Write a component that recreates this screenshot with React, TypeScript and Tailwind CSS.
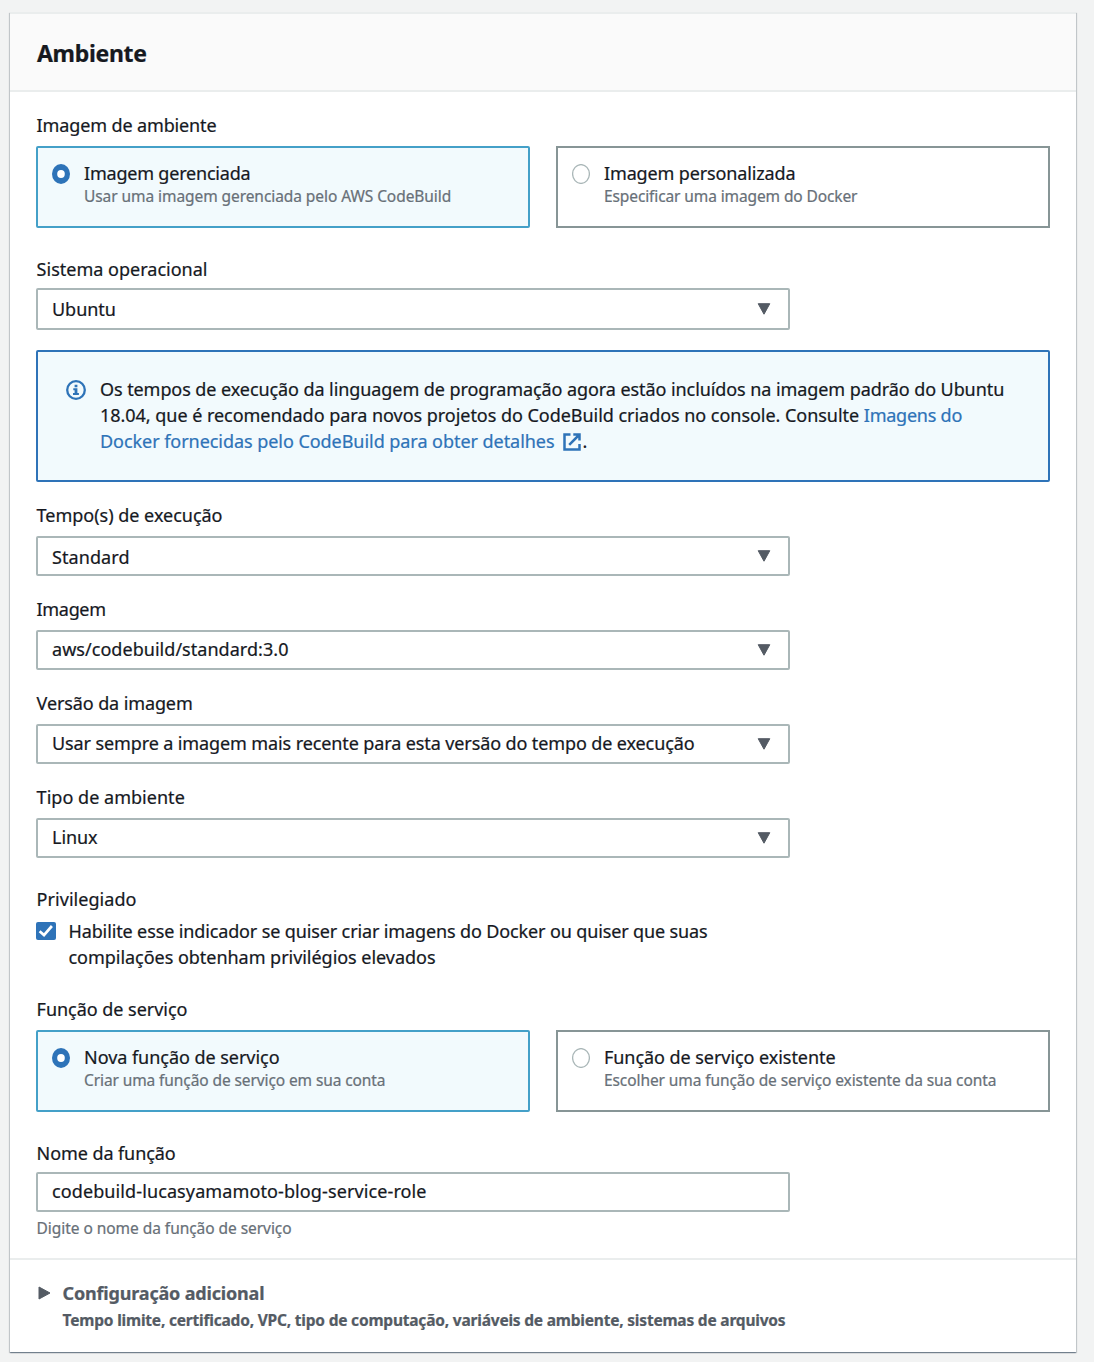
import type { ReactNode } from "react";

function Label({ children, className = "" }: { children: ReactNode; className?: string }) {
  return <div className={`h-[26px] pl-[0.6px] text-[18px] leading-[26px] whitespace-nowrap ${className}`}>{children}</div>;
}

function SelectBox({ value, className, valueClass }: { value: string; className: string; valueClass: string }) {
  return (
    <button
      type="button"
      className={`flex w-[754px] items-center justify-between rounded-[2px] border-2 border-[#aab7b8] bg-white pr-[17px] pl-[14px] text-left ${className}`}
    >
      <span className={`self-start text-[18px] leading-[26px] whitespace-nowrap ${valueClass}`}>{value}</span>
      <svg width="14" height="12" viewBox="0 0 14 12" className="shrink-0 text-[#545b64]">
        <path d="M1.2 .7h11.6L7 11.2z" fill="currentColor" stroke="currentColor" strokeWidth="1" strokeLinejoin="round" />
      </svg>
    </button>
  );
}

function Tile({
  selected = false,
  title,
  titleClass,
  text,
  textClass,
}: {
  selected?: boolean;
  title: string;
  titleClass: string;
  text: string;
  textClass: string;
}) {
  return (
    <div
      className={`flex h-[82px] w-[494px] gap-[14px] border-2 pt-3 pl-[14px] ${
        selected ? "rounded-[2px] border-[#44a0c8] bg-[#f2fafd]" : "border-[#879596] bg-white"
      }`}
    >
      <svg width="18" height="20" viewBox="0 0 18 20" className="mt-1 shrink-0">
        {selected ? (
          <>
            <ellipse cx="9" cy="10" rx="9" ry="10" fill="#2e73b8" />
            <ellipse cx="9" cy="10" rx="3.8" ry="4" fill="#fff" />
          </>
        ) : (
          <ellipse cx="9" cy="10" rx="8.4" ry="9.4" fill="#fff" stroke="#aab7b8" strokeWidth="1.3" />
        )}
      </svg>
      <div className="whitespace-nowrap">
        <div className={`text-[18px] leading-[26px] ${titleClass}`}>{title}</div>
        <div className={`text-[15.5px] leading-5 text-[#687078] ${textClass}`}>{text}</div>
      </div>
    </div>
  );
}

export default function App() {
  return (
    <div className="h-[1362px] overflow-hidden bg-[#f2f3f3] pt-3 pl-[10px] font-['Noto_Sans',sans-serif] text-[#16191f] [-webkit-text-stroke:0.22px_currentColor]">
      <section className="h-[1340px] w-[1066px] bg-white shadow-[0_1px_1px_0_rgba(0,28,60,0.35),1px_1px_1px_0_rgba(0,28,36,0.15),-1px_1px_1px_0_rgba(0,28,36,0.15)]">
        <header className="h-20 border-y-2 border-[#eaeded] bg-[#fafafa] pt-6 pl-[27px]">
          <h2 className="text-[23px] leading-[30px] font-bold tracking-[-0.32px]">Ambiente</h2>
        </header>

        <div className="h-[1166px] pt-5 pl-[26px]">
          <Label className="tracking-[-0.13px]">Imagem de ambiente</Label>
          <div className="mt-2 flex gap-[26px]">
            <Tile
              selected
              title="Imagem gerenciada"
              titleClass="tracking-[-0.2px]"
              text="Usar uma imagem gerenciada pelo AWS CodeBuild"
              textClass="tracking-[-0.07px]"
            />
            <Tile
              title="Imagem personalizada"
              titleClass="tracking-[-0.14px]"
              text="Especificar uma imagem do Docker"
              textClass="tracking-[-0.11px]"
            />
          </div>

          <Label className="mt-7 tracking-[0.01px]">Sistema operacional</Label>
          <SelectBox value="Ubuntu" className="mt-[6px] h-[42px]" valueClass="pt-[6px] tracking-[-0.05px]" />

          <div className="mt-5 flex h-[132px] w-[1014px] gap-[14px] rounded-[2px] border-2 border-[#2e73b8] bg-[#f2fafd] pt-6 pl-7">
            <svg width="20" height="20" viewBox="0 0 20 20" className="mt-1 shrink-0" fill="#2e73b8">
              <circle cx="10" cy="10" r="8.8" fill="none" stroke="#2e73b8" strokeWidth="2.3" />
              <path d="M8.6 4.7h2.8v2.5H8.6zM7.3 8.2h4.1v4.8h1.5v2.1H7v-2.1h1.6v-2.7H7.3z" />
            </svg>
            <p className="text-[18px] leading-[26px] whitespace-nowrap">
              <span className="tracking-[-0.077px]">
                Os tempos de execução da linguagem de programação agora estão incluídos na imagem padrão do Ubuntu
              </span>
              <br />
              <span className="tracking-[-0.036px]">
                18.04, que é recomendado para novos projetos do CodeBuild criados no console. Consulte{" "}
              </span>
              <a href="#" className="text-[#2e73b8]">
                <span className="tracking-[-0.24px]">Imagens do</span>
                <br />
                <span className="tracking-[-0.048px]">Docker fornecidas pelo CodeBuild para obter detalhes</span>
                <svg
                  width="18"
                  height="18"
                  viewBox="0 0 18 18"
                  className="mr-[2px] ml-2 inline-block align-[-3px]"
                  fill="none"
                  stroke="currentColor"
                  strokeWidth="2.5"
                >
                  <path d="M7.5 1.5H1.5v15h15v-5.6M10.3 1.5h6.2v5.9M16 2 6.2 11.8" />
                </svg>
              </a>
              .
            </p>
          </div>

          <Label className="mt-5 tracking-[-0.015px]">Tempo(s) de execução</Label>
          <SelectBox value="Standard" className="mt-2 h-10" valueClass="pt-[6px] tracking-[0.08px]" />

          <Label className="mt-5 tracking-[-0.33px]">Imagem</Label>
          <SelectBox value="aws/codebuild/standard:3.0" className="mt-2 h-10" valueClass="pt-1 tracking-[0.04px]" />

          <Label className="mt-5 tracking-[-0.11px]">Versão da imagem</Label>
          <SelectBox
            value="Usar sempre a imagem mais recente para esta versão do tempo de execução"
            className="mt-2 h-10"
            valueClass="pt-1 tracking-[-0.11px]"
          />

          <Label className="mt-5 tracking-[0.03px]">Tipo de ambiente</Label>
          <SelectBox value="Linux" className="mt-2 h-10" valueClass="pt-1 tracking-[-0.05px]" />

          <Label className="mt-7 tracking-[0.05px]">Privilegiado</Label>
          <label className="mt-[6px] flex gap-3">
            <svg width="20" height="18" viewBox="0 0 20 18" className="mt-1 shrink-0">
              <rect width="20" height="18" rx="2" fill="#2e73b8" />
              <path d="M3.6 9.3 8 13.1 15.9 4" fill="none" stroke="#fff" strokeWidth="2.7" />
            </svg>
            <span className="pl-[0.5px] text-[18px] leading-[26px] whitespace-nowrap">
              <span className="tracking-[-0.128px]">
                Habilite esse indicador se quiser criar imagens do Docker ou quiser que suas
              </span>
              <br />
              <span className="tracking-[-0.032px]">compilações obtenham privilégios elevados</span>
            </span>
          </label>

          <Label className="mt-[26px] tracking-[-0.03px]">Função de serviço</Label>
          <div className="mt-2 flex gap-[26px]">
            <Tile
              selected
              title="Nova função de serviço"
              titleClass="tracking-[-0.035px]"
              text="Criar uma função de serviço em sua conta"
              textClass="tracking-[-0.1px]"
            />
            <Tile
              title="Função de serviço existente"
              titleClass="tracking-[-0.055px]"
              text="Escolher uma função de serviço existente da sua conta"
              textClass="tracking-[-0.09px]"
            />
          </div>

          <Label className="mt-7 tracking-[-0.085px]">Nome da função</Label>
          <input
            defaultValue="codebuild-lucasyamamoto-blog-service-role"
            className="mt-[6px] block h-10 w-[754px] rounded-[2px] border-2 border-[#aab7b8] bg-white px-[14px] pb-[6px] pt-1 text-[18px] leading-[26px] tracking-[0.108px]"
          />
          <p className="mt-[6px] pl-[0.6px] text-[15.5px] leading-5 tracking-[-0.05px] text-[#687078]">
            Digite o nome da função de serviço
          </p>
        </div>

        <footer className="flex h-[94px] gap-3 border-t-2 border-[#eaeded] pt-5 pl-7 text-[#545b64]">
          <svg width="13" height="14" viewBox="0 0 13 14" className="mt-[6px] shrink-0">
            <path d="M1 1v12L12 7z" fill="currentColor" stroke="currentColor" strokeLinejoin="round" />
          </svg>
          <div className="-ml-[0.4px] font-bold whitespace-nowrap">
            <div className="text-[18px] leading-[26px] tracking-[-0.18px]">Configuração adicional</div>
            <div className="mt-1 text-[15.5px] leading-5 tracking-[-0.203px]">
              Tempo limite, certificado, VPC, tipo de computação, variáveis de ambiente, sistemas de arquivos
            </div>
          </div>
        </footer>
      </section>
    </div>
  );
}
